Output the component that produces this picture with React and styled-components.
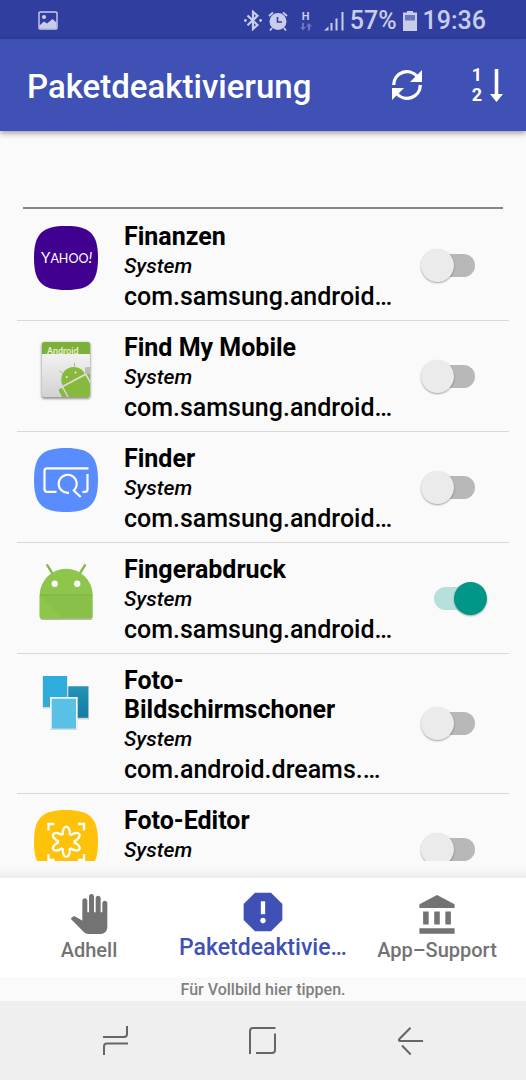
import React, { useState } from 'react'
import styled, { createGlobalStyle } from 'styled-components'

const GlobalStyle = createGlobalStyle`
  * {
    box-sizing: border-box;
  }
  body {
    margin: 0;
    background: #fafafa;
    font-family: Roboto, sans-serif;
  }
`;

const Screen = styled.div`
  display: flex;
  flex-direction: column;
  height: 100vh;
  background: #fafafa;
`;

const StatusBar = styled.div`
  display: flex;
  align-items: center;
  justify-content: space-between;
  height: 39px;
  padding: 2px 40px 0 38px;
  background: #303f9f;
  color: #c9cdea;
`;

const StatusGroup = styled.div`
  display: flex;
  align-items: center;
  gap: 6px;
  font-size: 25px;
  font-weight: 500;
  line-height: 28px;
`;

const DataState = styled.div`
  display: flex;
  flex-direction: column;
  align-items: center;
  width: 24px;
  font-size: 11px;
  font-weight: 700;
  line-height: 12px;
`;

const AppBar = styled.header`
  position: relative;
  display: flex;
  align-items: center;
  height: 92px;
  padding: 0 23px 0 27px;
  background: #3f51b5;
  color: #fff;
  box-shadow: 0 2px 6px rgba(0, 0, 0, 0.4);
`;

const Title = styled.h1`
  flex: 1;
  margin: 0;
  padding-top: 3px;
  font-size: 33px;
  font-weight: 500;
  line-height: 40px;
`;

const Actions = styled.div`
  display: flex;
  align-items: center;
  gap: 50px;
`;

const IconButton = styled.button`
  display: flex;
  align-items: center;
  gap: 8px;
  padding: 0;
  border: none;
  background: none;
  color: inherit;
  font-family: inherit;
  cursor: pointer;
`;

const SortDigits = styled.span`
  display: flex;
  flex-direction: column;
  font-size: 18px;
  font-weight: 700;
  line-height: 20px;
`;

const SearchInput = styled.input`
  height: 54px;
  margin: 24px 23px 0;
  padding: 0 4px;
  border: none;
  border-bottom: 2px solid #858585;
  border-radius: 0;
  background: none;
  font-family: inherit;
  font-size: 25px;
  outline: none;
`;

const PackageList = styled.ul`
  flex: 1 1 0;
  min-height: 0;
  margin: 1px 0 0;
  padding: 0 17px;
  overflow: hidden;
  list-style: none;
`;

const PackageRow = styled.li`
  display: flex;
  gap: 26px;
  padding: 12px 22px 8px 17px;
  border-bottom: 1px solid #d8d8d8;
`;

const AppIcon = styled.svg`
  flex: none;
  width: 64px;
  height: 64px;
  margin-top: 4px;
`;

const PackageInfo = styled.div`
  flex: 1;
  min-width: 0;
  color: #000;
`;

const PackageName = styled.label`
  display: block;
  font-size: 25px;
  font-weight: 700;
  line-height: 29px;
`;

const PackageType = styled.div`
  font-size: 21px;
  font-style: italic;
  font-weight: 500;
  line-height: 30px;
`;

const PackageId = styled.div`
  overflow: hidden;
  font-size: 25px;
  font-weight: 500;
  line-height: 31px;
  text-overflow: ellipsis;
  white-space: nowrap;
`;

const Switch = styled.input`
  appearance: none;
  position: relative;
  flex: none;
  width: 41px;
  height: 23px;
  margin: 0;
  border-radius: 12px;
  background: #b8b8b8;
  cursor: pointer;

  &::before {
    content: "";
    position: absolute;
    top: -5px;
    left: -13px;
    width: 33px;
    height: 33px;
    border-radius: 50%;
    background: #ebebeb;
    box-shadow: 0 1px 2px rgba(0, 0, 0, 0.35);
  }

  &:checked {
    background: #b7e0dc;
  }

  &:checked::before {
    left: 20px;
    background: #009688;
  }
`;

const SwitchSlot = styled.div`
  display: flex;
  align-items: center;
  padding: 0 12px 4px 15px;
`;

const BottomShade = styled.div`
  height: 17px;
  background: linear-gradient(#fafafa 30%, #eeeeee);
`;

const BottomNav = styled.nav`
  display: flex;
  height: 99px;
  padding: 0 2px;
  background: #fff;
`;

const NavItem = styled.a`
  display: flex;
  flex: 1 1 0;
  flex-direction: column;
  align-items: center;
  min-width: 0;
  padding: ${({ $active }) => ($active ? '14px 3px 0' : '16px 3px 0')};
  color: ${({ $active }) => ($active ? '#3f51b5' : '#737373')};
  text-decoration: none;

  svg {
    flex: none;
    height: 40px;
  }
`;

const NavLabel = styled.span`
  max-width: 100%;
  overflow: hidden;
  font-size: ${({ $active }) => ($active ? '23px' : '20px')};
  font-weight: 500;
  line-height: 32px;
  text-overflow: ellipsis;
  white-space: nowrap;
`;

const FullscreenHint = styled.button`
  height: 24px;
  padding: 2px 0 0;
  border: none;
  background: #fafafa;
  color: #808080;
  font-family: inherit;
  font-size: 16px;
  font-weight: 500;
  line-height: 22px;
`;

const SystemBar = styled.div`
  display: flex;
  height: 79px;
  padding: 0 42px;
  background: #efefef;
  color: #666;
`;

const SystemButton = styled.button`
  display: flex;
  flex: 1;
  align-items: center;
  justify-content: center;
  padding: 0;
  border: none;
  background: none;
  color: inherit;
`;

const SQUIRCLE = 'M32 0C56 0 64 8 64 32S56 64 32 64 0 56 0 32 8 0 32 0z';

const FinanceIcon = () => (
  <AppIcon viewBox="0 0 64 64" aria-hidden="true">
    <path d={SQUIRCLE} fill="#400090" />
    <text x="7" y="37" fill="#fff" fontFamily="Lato, sans-serif" fontWeight="400" fontSize="12.500">
      <tspan fontSize="15">Y</tspan>AHOO<tspan fontSize="15" fontStyle="italic">!</tspan>
    </text>
  </AppIcon>
)

const FindMobileIcon = () => (
  <AppIcon viewBox="0 0 64 64" aria-hidden="true">
    <defs>
      <linearGradient id="paper" x1="0" y1="0" x2="0" y2="1">
        <stop offset="0" stopColor="#fafafa" />
        <stop offset="1" stopColor="#d2d2d2" />
      </linearGradient>
      <clipPath id="card"><rect x="8" y="5" width="48" height="55" rx="2" /></clipPath>
      <filter id="soft" x="-20%" y="-20%" width="140%" height="140%"><feGaussianBlur stdDeviation="1.2" /></filter>
    </defs>
    <rect x="7.500" y="5.500" width="49" height="56.500" rx="3" fill="#777" opacity="0.75" filter="url(#soft)" />
    <g clipPath="url(#card)">
      <rect x="8" y="5" width="48" height="55" fill="url(#paper)" />
      <rect x="8" y="5" width="48" height="12" fill="#7cb03a" />
      <text x="13" y="17" fill="#eef2cf" fontFamily="Roboto, sans-serif" fontWeight="500" fontSize="9">Android</text>
      <g transform="rotate(-28 40 43)" fill="#86b93c">
        <path d="M27.500 42.500a12.500 12.500 0 0 1 25 0z" />
        <path d="M27.500 44.200h25v22h-25z" />
        <rect x="21.500" y="44" width="4.500" height="14" rx="2.200" />
        <rect x="54" y="40" width="4.500" height="14" rx="2.200" />
        <path d="M33.500 32l-2-4M46.500 32l2-4" stroke="#a9b98a" strokeWidth="0.8" />
        <circle cx="35" cy="37" r="1" fill="#e8f0d8" />
        <circle cx="45" cy="37" r="1" fill="#e8f0d8" />
      </g>
      <rect x="51" y="30" width="7" height="7" rx="2" fill="#b9bdb4" />
    </g>
  </AppIcon>
)

const FinderIcon = () => (
  <AppIcon viewBox="0 0 64 64" aria-hidden="true">
    <path d={SQUIRCLE} fill="#598cff" />
    <g fill="none" stroke="#fff" strokeWidth="2.200">
      <path d="M54.500 20.300H13q-2.500 0-2.500 2.500v18.500q0 2.500 2.500 2.500h9.500" />
      <path d="M53.500 26v15.300q0 2.500-2.500 2.500h-2.500" />
      <path d="M35 44.700a9 9 0 1 1 4.700-2.200l7 6.500" />
    </g>
    <path d="M36 46l3-3" stroke="#598cff" strokeWidth="1.500" />
  </AppIcon>
)

const FingerprintIcon = () => (
  <AppIcon viewBox="0 0 64 64" aria-hidden="true">
    <path d="M6.500 59.500q.5 1.500 2 1.500h47.500q2 0 2.500-1.500z" fill="#b5b8b0" />
    <path d="M13.200 6.200l5.300 8.500M51 6.200l-5.300 8.500" stroke="#84b84b" strokeWidth="2.400" strokeLinecap="round" />
    <path d="M5.700 36a26.500 26.300 0 0 1 53 0z" fill="#8ec64c" />
    <path d="M5.700 36h53v21.300q0 2.500-2.500 2.500h-48q-2.500 0-2.500-2.500z" fill="#88c04a" />
    <path d="M5.700 36l23.300 23.800h-20.800q-2.500 0-2.500-2.500z" fill="#8ec64c" />
    <path d="M5.700 36h53" stroke="#79ad41" strokeWidth="0.7" />
    <circle cx="20.700" cy="24.700" r="3.200" fill="#fafafa" />
    <circle cx="43.200" cy="24.700" r="3.200" fill="#fafafa" />
  </AppIcon>
)

const DreamsIcon = () => (
  <AppIcon viewBox="0 0 64 64" aria-hidden="true">
    <defs>
      <linearGradient id="dark" x1="0" y1="0" x2="0" y2="1">
        <stop offset="0" stopColor="#2493b8" />
        <stop offset="1" stopColor="#147ba4" />
      </linearGradient>
    </defs>
    <path d="M8.500 6h25v32.500h-25zM33.500 16.500h21.500v33h-21.500z" fill="#b8bfc3" opacity="0.6" />
    <rect x="9" y="6" width="24" height="31" fill="#2eacdb" />
    <rect x="34.300" y="16.300" width="20" height="31.500" fill="url(#dark)" />
    <rect x="16" y="27" width="27.500" height="33" fill="#c4cbce" />
    <rect x="16" y="27" width="27.500" height="32.300" fill="#f4fafc" />
    <rect x="17.700" y="28.700" width="24.300" height="30" fill="#5ac0e6" />
  </AppIcon>
)

const PhotoEditorIcon = () => (
  <AppIcon viewBox="0 0 64 64" aria-hidden="true">
    <path d={SQUIRCLE} fill="#ffc20a" />
    <g fill="none" stroke="#fff" strokeWidth="2.300">
      <path d="M14.500 20.500v-6.500h6M44 14h6v6.500M14.500 44v6h6M44 50h6v-6" />
      <g transform="translate(32.300 31.700)" strokeLinejoin="round">
        {[0, 60, 120, 180, 240, 300].map((angle) => (
          <path key={angle} transform={`rotate(${angle})`} d="M-3.500-6.500C-4.500-18 4.500-18 3.500-6.500" />
        ))}
      </g>
    </g>
  </AppIcon>
)

const packages = [
  { id: 'com.samsung.android.widgetapp.yahooedge.finance', name: 'Finanzen', icon: FinanceIcon, enabled: false },
  { id: 'com.samsung.android.fmm', name: 'Find My Mobile', icon: FindMobileIcon, enabled: false },
  { id: 'com.samsung.android.app.galaxyfinder', name: 'Finder', icon: FinderIcon, enabled: false },
  { id: 'com.samsung.android.fingerprint.service', name: 'Fingerabdruck', icon: FingerprintIcon, enabled: true },
  { id: 'com.android.dreams.phototable', name: 'Foto-Bildschirmschoner', icon: DreamsIcon, enabled: false },
  { id: 'com.sec.android.mimage.photoretouching', name: 'Foto-Editor', icon: PhotoEditorIcon, enabled: false },
];

const PackageItem = ({ item }) => {
  const [enabled, setEnabled] = useState(item.enabled);
  const Icon = item.icon;

  return (
    <PackageRow>
      <Icon />
      <PackageInfo>
        <PackageName htmlFor={item.id}>{item.name}</PackageName>
        <PackageType>System</PackageType>
        <PackageId>{item.id}</PackageId>
      </PackageInfo>
      <SwitchSlot>
        <Switch
          id={item.id}
          type="checkbox"
          role="switch"
          checked={enabled}
          onChange={() => setEnabled(!enabled)}
        />
      </SwitchSlot>
    </PackageRow>
  )
}

const App = () => {
  return (
    <Screen>
      <GlobalStyle />
      <StatusBar>
        <svg width="20" height="19" viewBox="0 0 20 19" fill="currentColor">
          <rect x="1" y="1" width="18" height="17" rx="1" fill="none" stroke="currentColor" strokeWidth="1.400" />
          <circle cx="6" cy="6" r="2.100" />
          <path d="M1.500 17.500v-3l4.500-4 3 2 5.500-4.500 4 3.500v6z" />
        </svg>
        <StatusGroup>
          <svg width="18" height="21" viewBox="0 0 18 21">
            <path d="M3.500 5.500l10 9.500-4.500 4V1.800l4.500 4-10 9.500" fill="none" stroke="currentColor" strokeWidth="2.200" />
            <circle cx="1.400" cy="10.500" r="1.400" fill="currentColor" />
            <circle cx="16.600" cy="10.500" r="1.400" fill="currentColor" />
          </svg>
          <svg width="20" height="20" viewBox="0 0 20 20">
            <circle cx="10" cy="10.500" r="8.500" fill="currentColor" />
            <path d="M1 5l4-3.500M19 5l-4-3.500M4 17l-2 2.500M16 17l2 2.500" stroke="currentColor" strokeWidth="1.800" />
            <path d="M9.500 6v5h4.500" fill="none" stroke="#303f9f" strokeWidth="1.600" />
          </svg>
          <DataState>
            H
            <svg width="12" height="8" viewBox="0 0 12 8" fill="#6b77c0">
              <path d="M2 0h2v4h2L3 7.500 0 4h2zM8 7.500h2v-4h2L9 0 6 3.500h2z" />
            </svg>
          </DataState>
          <svg width="20" height="20" viewBox="0 0 20 20" fill="currentColor">
            <path d="M0 19.500l4.500-4v4zM6.500 12h2v7.500h-2zM11.500 7.500h2v12h-2zM17.500 1h2v18.500h-2z" />
          </svg>
          <span>57%</span>
          <svg width="14" height="20" viewBox="0 0 14 20">
            <path d="M4 0h6v1.500h4V20H0V1.500h4z" fill="currentColor" />
            <path d="M2 4h10v5.500H2z" fill="#6a76bd" />
          </svg>
          <span>19:36</span>
        </StatusGroup>
      </StatusBar>

      <AppBar>
        <Title>Paketdeaktivierung</Title>
        <Actions>
          <IconButton aria-label="Aktualisieren">
            <svg width="30" height="30" viewBox="0 0 30 30" fill="currentColor">
              <path d="M1.700 15A13.300 13.300 0 0 1 25.500 6.800M28.300 15A13.300 13.300 0 0 1 4.500 23.200" fill="none" stroke="currentColor" strokeWidth="3.300" />
              <path d="M30 0v12H18zM0 30V18h12z" />
            </svg>
          </IconButton>
          <IconButton aria-label="Sortieren">
            <SortDigits>
              <span>1</span>
              <span>2</span>
            </SortDigits>
            <svg width="13" height="33" viewBox="0 0 13 33" fill="currentColor">
              <path d="M4.700 0h3.600v25H13l-6.500 8L0 25h4.700z" />
            </svg>
          </IconButton>
        </Actions>
      </AppBar>

      <SearchInput type="text" aria-label="Suche" />

      <PackageList>
        {packages.map((item) => (
          <PackageItem key={item.id} item={item} />
        ))}
      </PackageList>

      <BottomShade />
      <BottomNav>
        <NavItem href="#adhell">
          <svg width="40" viewBox="0 0 24 24" fill="currentColor">
            <path d="M23 5.500V20c0 2.200-1.800 4-4 4h-7.300c-1.080 0-2.100-.43-2.850-1.190L1 14.830s1.260-1.230 1.300-1.250c.22-.19.49-.29.79-.29.22 0 .42.06.6.16.04.01 4.310 2.460 4.310 2.460V4c0-.83.67-1.500 1.500-1.500S11 3.170 11 4v7h1V1.500c0-.83.67-1.500 1.500-1.500S15 .67 15 1.500V11h1V2.500c0-.83.67-1.500 1.500-1.500s1.500.67 1.500 1.500V11h1V5.500c0-.83.67-1.500 1.500-1.500s1.500.67 1.500 1.500z" />
          </svg>
          <NavLabel>Adhell</NavLabel>
        </NavItem>
        <NavItem href="#pakete" $active>
          <svg width="40" viewBox="2.700 2.700 18.600 18.600" fill="currentColor">
            <path d="M15.730 3H8.270L3 8.270v7.460L8.270 21h7.460L21 15.730V8.270L15.730 3zM12 17.300c-.72 0-1.300-.58-1.300-1.300 0-.72.58-1.300 1.300-1.300.72 0 1.300.58 1.300 1.300 0 .72-.58 1.300-1.300 1.300zm1-4.300h-2V7h2v6z" />
          </svg>
          <NavLabel $active>Paketdeaktivierung</NavLabel>
        </NavItem>
        <NavItem href="#support">
          <svg width="40" viewBox="0.700 0.500 21.600 21.600" fill="currentColor">
            <path d="M4 10v7h3v-7H4zm6 0v7h3v-7h-3zM2 22h19v-3H2v3zm14-12v7h3v-7h-3zm-4.500-9L2 6v2h19V6l-9.500-5z" />
          </svg>
          <NavLabel>App–Support</NavLabel>
        </NavItem>
      </BottomNav>

      <FullscreenHint>Für Vollbild hier tippen.</FullscreenHint>

      <SystemBar>
        <SystemButton aria-label="Letzte Apps">
          <svg width="25" height="29" viewBox="0 0 25 29" fill="none" stroke="currentColor" strokeWidth="2">
            <path d="M24 0v8q0 3-3 3H0M25 17.500H4q-3 0-3 3V29" />
          </svg>
        </SystemButton>
        <SystemButton aria-label="Startseite">
          <svg width="27" height="27" viewBox="0 0 27 27" fill="none" stroke="currentColor" strokeWidth="2">
            <path d="M1 27V4q0-3 3-3h22.500M26 6.500V23q0 3-3 3H7" />
          </svg>
        </SystemButton>
        <SystemButton aria-label="Zurück">
          <svg width="25" height="28" viewBox="0 0 25 28" fill="none" stroke="currentColor" strokeWidth="2">
            <path d="M12.500 .7L1.200 12.200q-1 1.800 1 1.800H25M4 18.500l8.700 9" />
          </svg>
        </SystemButton>
      </SystemBar>
    </Screen>
  )
}

export default App
